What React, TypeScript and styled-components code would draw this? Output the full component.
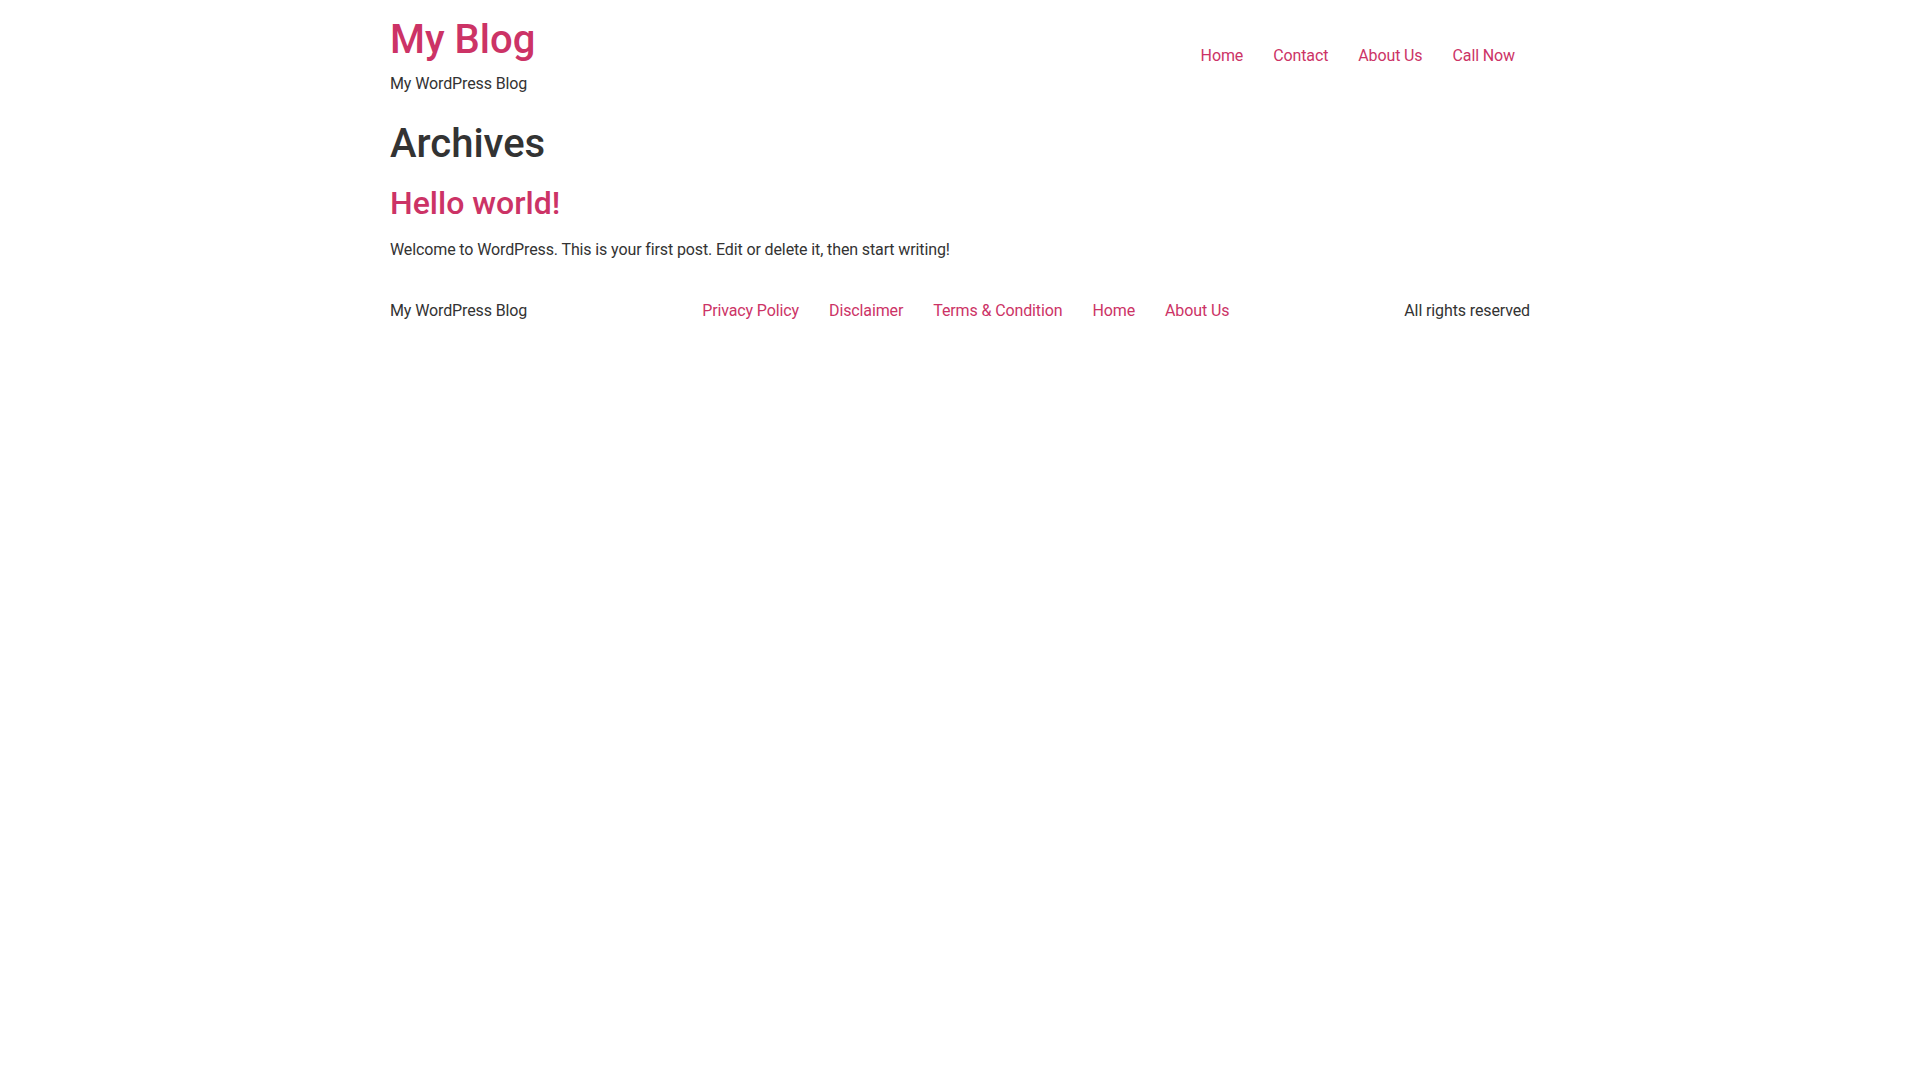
import React from "react";
import styled, { createGlobalStyle } from "styled-components";

const linkColor = "#cc3366";
const textColor = "#333333";

const GlobalStyle = createGlobalStyle`
  html, body {
    margin: 0;
    padding: 0;
    background: #ffffff;
  }
  body {
    font-family: Roboto, "Liberation Sans", Arial, sans-serif;
    font-size: 16px;
    line-height: 1.5;
    letter-spacing: -0.12px;
    color: ${textColor};
  }
  * { box-sizing: border-box; }
`;

const Container = styled.div`
  max-width: 1140px;
  margin: 0 auto;
`;

const Header = styled.header`
  display: flex;
  justify-content: space-between;
  align-items: center;
  padding: 16px 0;
`;

const Branding = styled.div`
  display: flex;
  flex-direction: column;
  gap: 8px;
`;

const SiteTitle = styled.a`
  font-size: 40px;
  font-weight: 500;
  line-height: 1.2;
  letter-spacing: 0;
  color: ${linkColor};
  text-decoration: none;
`;

const Tagline = styled.p`
  margin: 0;
`;

const Menu = styled.ul`
  display: flex;
  list-style: none;
  margin: 0;
  padding: 0;
`;

const MenuLink = styled.a<{ $compact?: boolean }>`
  display: block;
  padding: ${(p) => (p.$compact ? "6px 15px" : "0 15px")};
  color: ${linkColor};
  text-decoration: none;
`;

const PageTitle = styled.h1`
  font-size: 40px;
  font-weight: 500;
  line-height: 1.2;
  letter-spacing: 0;
  margin: 8px 0 16px;
`;

const PostTitle = styled.h2`
  font-size: 32px;
  font-weight: 500;
  line-height: 1.2;
  letter-spacing: 0;
  margin: 0 0 16px;

  a {
    color: ${linkColor};
    text-decoration: none;
  }
`;

const Excerpt = styled.p`
  margin: 0 0 14.4px;
`;

const Footer = styled.footer`
  display: flex;
  justify-content: space-between;
  align-items: center;
  padding: 16px 0;
`;

const FooterText = styled.p`
  margin: 0;
`;

const headerLinks = ["Home", "Contact", "About Us", "Call Now"];
const footerLinks = ["Privacy Policy", "Disclaimer", "Terms & Condition", "Home", "About Us"];

export default function App() {
  return (
    <>
      <GlobalStyle />
      <Container>
        <Header>
          <Branding>
            <SiteTitle href="#">My Blog</SiteTitle>
            <Tagline>My WordPress Blog</Tagline>
          </Branding>
          <nav>
            <Menu>
              {headerLinks.map((l) => (
                <li key={l}>
                  <MenuLink href="#">{l}</MenuLink>
                </li>
              ))}
            </Menu>
          </nav>
        </Header>
        <main>
          <PageTitle>Archives</PageTitle>
          <article>
            <PostTitle>
              <a href="#">Hello world!</a>
            </PostTitle>
            <Excerpt>
              Welcome to WordPress. This is your first post. Edit or delete it, then start writing!
            </Excerpt>
          </article>
        </main>
        <Footer>
          <FooterText>My WordPress Blog</FooterText>
          <nav>
            <Menu>
              {footerLinks.map((l, i) => (
                <li key={i}>
                  <MenuLink $compact href="#">{l}</MenuLink>
                </li>
              ))}
            </Menu>
          </nav>
          <FooterText>All rights reserved</FooterText>
        </Footer>
      </Container>
    </>
  );
}
